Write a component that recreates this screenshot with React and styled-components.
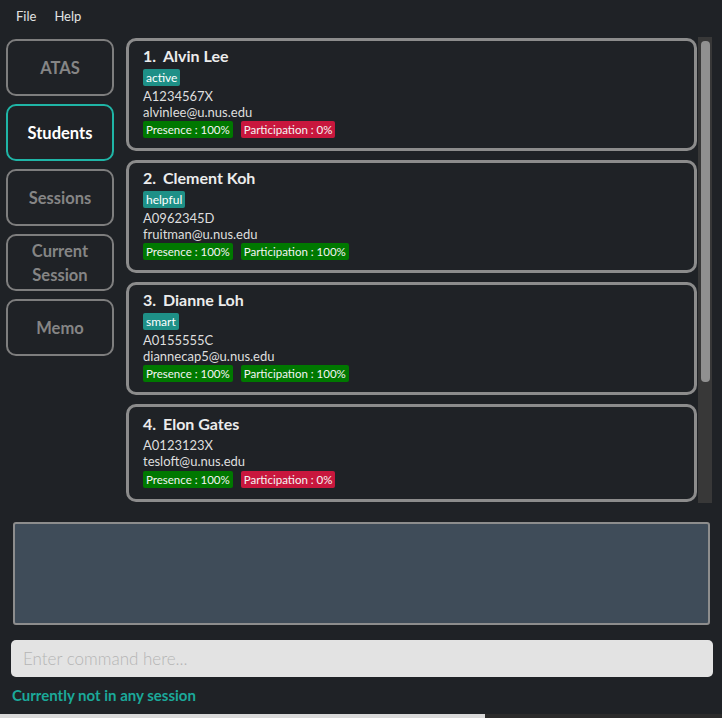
import React from "react";
import styled, { createGlobalStyle } from "styled-components";

const students = [
  { name: "Alvin Lee", tag: "active", id: "A1234567X", email: "alvinlee@u.nus.edu", presence: 100, participation: 0 },
  { name: "Clement Koh", tag: "helpful", id: "A0962345D", email: "fruitman@u.nus.edu", presence: 100, participation: 100 },
  { name: "Dianne Loh", tag: "smart", id: "A0155555C", email: "diannecap5@u.nus.edu", presence: 100, participation: 100 },
  { name: "Elon Gates", id: "A0123123X", email: "tesloft@u.nus.edu", presence: 100, participation: 0 },
];

const tabs = ["ATAS", "Students", "Sessions", "Current\nSession", "Memo"];

export default function App() {
  return (
    <>
      <GlobalStyle />
      <Window>
        <MenuBar>
          <span>File</span>
          <span>Help</span>
        </MenuBar>

        <Main>
          <Sidebar>
            {tabs.map((t) => (
              <TabButton key={t} active={t === "Students"}>
                {t}
              </TabButton>
            ))}
          </Sidebar>

          <ListPane>
            <CardList>
              {students.map((s, i) => (
                <Card key={s.id} hasTag={!!s.tag}>
                  <Name>
                    <span>{i + 1}.</span>
                    {s.name}
                  </Name>
                  {s.tag && <Tag>{s.tag}</Tag>}
                  <Info>{s.id}</Info>
                  <Info>{s.email}</Info>
                  <Badges hasTag={!!s.tag}>
                    <Badge good>Presence : {s.presence}%</Badge>
                    <Badge good={s.participation > 0}>
                      Participation : {s.participation}%
                    </Badge>
                  </Badges>
                </Card>
              ))}
            </CardList>
            <ScrollTrack>
              <ScrollThumb />
            </ScrollTrack>
          </ListPane>
        </Main>

        <ResultBox />
        <CommandInput placeholder="Enter command here..." />
        <Status>Currently not in any session</Status>
        <Footer>
          <div className="light" />
          <div className="dark" />
        </Footer>
      </Window>
    </>
  );
}

const GlobalStyle = createGlobalStyle`
  html, body {
    margin: 0;
    padding: 0;
    background: #1f2226;
  }
  * {
    box-sizing: border-box;
  }
`;

const Window = styled.div`
  width: 722px;
  height: 718px;
  display: flex;
  flex-direction: column;
  background: #1f2226;
  font-family: Lato, "Open Sans", sans-serif;
  overflow: hidden;
`;

const MenuBar = styled.div`
  height: 31px;
  display: flex;
  align-items: center;
  gap: 18px;
  padding-left: 16px;
  font-size: 13px;
  color: #e2e2e2;
`;

const Main = styled.div`
  display: flex;
  padding: 6px 10px 0 6px;
  height: 472px;
`;

const Sidebar = styled.div`
  width: 108px;
  display: flex;
  flex-direction: column;
  gap: 8px;
  padding-top: 2px;
`;

const TabButton = styled.div`
  height: 57px;
  border: 2px solid ${(p) => (p.active ? "#1fb5a6" : "#7e7e7e")};
  border-radius: 10px;
  display: flex;
  align-items: center;
  justify-content: center;
  text-align: center;
  white-space: pre-line;
  font-size: 16.5px;
  font-weight: 700;
  line-height: 24px;
  color: ${(p) => (p.active ? "#ffffff" : "#858585")};
`;

const ListPane = styled.div`
  flex: 1;
  display: flex;
  margin-left: 12px;
`;

const CardList = styled.div`
  flex: 1;
  display: flex;
  flex-direction: column;
  gap: 9px;
  padding-top: 1px;
`;

const Card = styled.div`
  flex-shrink: 0;
  width: 571px;
  height: ${(p) => (p.hasTag ? "113px" : "98px")};
  border: 3px solid #8c8c8c;
  border-radius: 10px;
  padding: ${(p) => (p.hasTag ? "5px" : "7px")} 14px 0;
  color: #e6e6e6;
`;

const Name = styled.div`
  font-size: 16px;
  font-weight: 700;
  line-height: 20px;
  color: #ececec;
  margin-bottom: 3px;

  span {
    display: inline-block;
    width: 20px;
  }
`;

const Tag = styled.div`
  width: fit-content;
  height: 17px;
  background: #1e9087;
  color: #ffffff;
  font-size: 12px;
  line-height: 17px;
  padding: 0 3px;
  border-radius: 2px;
  margin-bottom: 2px;
`;

const Info = styled.div`
  font-size: 13px;
  line-height: 16px;
  color: #dedede;
`;

const Badges = styled.div`
  display: flex;
  gap: 8px;
  margin-top: ${(p) => (p.hasTag ? "1px" : "2px")};
`;

const Badge = styled.div`
  height: 17px;
  display: flex;
  align-items: center;
  background: ${(p) => (p.good ? "#007800" : "#c8173d")};
  color: #f4f4f4;
  font-size: 11.5px;
  padding: 0 3px;
  border-radius: 2px;
`;

const ScrollTrack = styled.div`
  width: 14px;
  height: 466px;
  margin-left: 1px;
  background: #383838;
  padding: 4px 2px 0 3px;
`;

const ScrollThumb = styled.div`
  height: 341px;
  background: #909090;
  border-radius: 4px;
`;

const ResultBox = styled.div`
  margin: 19px 12px 0 13px;
  height: 103px;
  background: #3f4c59;
  border: 2px solid #8d8d8d;
  border-radius: 3px;
`;

const CommandInput = styled.input`
  margin: 15px 9px 0 11px;
  height: 37px;
  background: #e3e3e3;
  border: none;
  border-radius: 5px;
  padding: 0 12px;
  font-family: Lato, "Open Sans", sans-serif;
  font-size: 17px;
  font-weight: 300;
  color: #333;
  outline: none;

  &::placeholder {
    color: #b5b5b5;
  }
`;

const Status = styled.div`
  margin: 9px 0 0 12px;
  font-size: 15px;
  font-weight: 700;
  line-height: 18px;
  color: #1ba99a;
`;

const Footer = styled.div`
  margin-top: auto;
  height: 4px;
  display: flex;

  .light {
    width: 485px;
    background: #d9d9d9;
  }
  .dark {
    flex: 1;
    background: #2b2b2b;
  }
`;
